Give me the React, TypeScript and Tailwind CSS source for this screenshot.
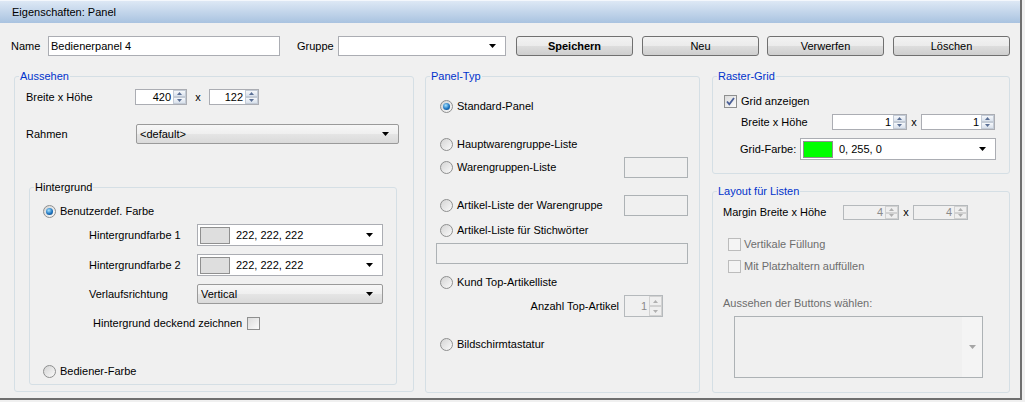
import type { ReactNode } from "react";

function Arrow({ disabled }: { disabled?: boolean }) {
  return (
    <svg width="7" height="4" viewBox="0 0 7 4" className="shrink-0">
      <path d="M0 0h7L3.5 4z" fill={disabled ? "#a5a5a5" : "#000"} />
    </svg>
  );
}

function SpinHalf({ up, disabled }: { up?: boolean; disabled?: boolean }) {
  return (
    <div
      className={`flex flex-1 items-center justify-center border ${
        disabled
          ? "border-[#d2d2d2] bg-[#efefef]"
          : "border-[#c3cbd6] bg-gradient-to-b from-[#f6f8fb] to-[#d9e1ec]"
      }`}
    >
      <svg width="5" height="3" viewBox="0 0 5 3">
        <path d={up ? "M0 3h5L2.5 0z" : "M0 0h5L2.5 3z"} fill={disabled ? "#b0b0b0" : "#5a6f95"} />
      </svg>
    </div>
  );
}

function Spin({ value, className, disabled }: { value: string; className: string; disabled?: boolean }) {
  return (
    <div
      className={`flex border ${
        disabled ? "border-[#b5b9bc] bg-[#f0f0f0] text-[#8a8a8a]" : "border-[#abadb3] bg-white text-black"
      } ${className}`}
    >
      <span className="flex-1 self-center pr-[2px] text-right leading-none">{value}</span>
      <div className="flex w-[13px] flex-col">
        <SpinHalf up disabled={disabled} />
        <SpinHalf disabled={disabled} />
      </div>
    </div>
  );
}

function Combo({
  className,
  children,
  gray
}: {
  className: string;
  children?: ReactNode;
  gray?: boolean;
}) {
  return (
    <div
      className={`flex items-center pr-[9px] ${
        gray
          ? "rounded-[2px] border border-[#9a9a9a] bg-[linear-gradient(#f7f7f7,#efefef_50%,#e5e5e5_50%,#dadada)] pl-[3px]"
          : "border border-[#abadb3] bg-white"
      } ${className}`}
    >
      <div className="flex flex-1 items-center">{children}</div>
      <Arrow />
    </div>
  );
}

function ColorCombo({ color, label, className }: { color: string; label: string; className: string }) {
  return (
    <Combo className={`${className} pl-[2px]`}>
      <span className={`h-[17px] w-[30px] border border-[#8f8f8f] ${color}`} />
      <span className="ml-[6px]">{label}</span>
    </Combo>
  );
}

function Radio({ checked }: { checked?: boolean }) {
  return (
    <span className="flex h-[13px] w-[13px] shrink-0 items-center justify-center rounded-full border border-[#8e8f8f] bg-gradient-to-br from-[#d4d4d4] to-[#fafafa]">
      {checked ? (
        <span className="h-[7px] w-[7px] rounded-full bg-[radial-gradient(circle_at_40%_35%,#a8e4ff,#1d74c0_55%,#0c3b6e)]" />
      ) : null}
    </span>
  );
}

function Check({ checked, disabled }: { checked?: boolean; disabled?: boolean }) {
  return (
    <span
      className={`flex h-[13px] w-[13px] shrink-0 items-center justify-center border ${
        disabled ? "border-[#bcbcbc] bg-[#f4f4f4]" : "border-[#8e8f8f] bg-gradient-to-br from-[#dcdcdc] to-[#fbfbfb]"
      }`}
    >
      {checked ? (
        <svg width="9" height="9" viewBox="0 0 9 9">
          <path d="M1 4.5l2.3 2.8L8 1" fill="none" stroke="#4a5f97" strokeWidth="1.8" />
        </svg>
      ) : null}
    </span>
  );
}

function Group({
  title,
  className,
  children,
  black
}: {
  title: string;
  className: string;
  children: ReactNode;
  black?: boolean;
}) {
  return (
    <fieldset className={`rounded-[3px] border border-[#d5dfe5] ${className}`}>
      <legend className={`ml-[4px] px-[1px] leading-[14px] ${black ? "text-black" : "text-[#0033cc]"}`}>
        {title}
      </legend>
      {children}
    </fieldset>
  );
}

function Button({ children, bold }: { children: ReactNode; bold?: boolean }) {
  return (
    <button
      className={`h-[20px] w-[117px] rounded-[3px] border border-[#707070] bg-[linear-gradient(#f2f2f2,#ebebeb_50%,#dddddd_50%,#cfcfcf)] leading-none text-black ${
        bold ? "font-bold" : ""
      }`}
    >
      {children}
    </button>
  );
}

function RadioRow({ label, checked, className }: { label: string; checked?: boolean; className: string }) {
  return (
    <div className={`flex h-[16px] items-center ${className}`}>
      <Radio checked={checked} />
      <span className="ml-[4px]">{label}</span>
    </div>
  );
}

export default function App() {
  return (
    <div className="h-[402px] w-[1025px] bg-[#f0f0f0] font-['Liberation_Sans',Arial,sans-serif] text-[11px] text-black">
      <div className="h-[400px] w-[1022px] border-b-2 border-r-2 border-[#6f6f6f]">
        <div className="flex h-[23px] items-center border-t border-[#f3f7fc] bg-[linear-gradient(#dde8f5,#a9c3e0)] pl-[12px] text-[11px]">
          Eigenschaften: Panel
        </div>

        <div className="mt-[13px] flex h-[20px] items-center pl-[11px]">
          <span className="w-[37px]">Name</span>
          <div className="flex h-[20px] w-[232px] items-center border border-[#abadb3] bg-white pl-[2px]">
            Bedienerpanel 4
          </div>
          <span className="ml-[17px] w-[41px]">Gruppe</span>
          <Combo className="h-[20px] w-[168px]" />
          <div className="ml-[10px] flex">
            <Button bold>Speichern</Button>
            <div className="ml-[9px]">
              <Button>Neu</Button>
            </div>
            <div className="ml-[8px]">
              <Button>Verwerfen</Button>
            </div>
            <div className="ml-[9px]">
              <Button>Löschen</Button>
            </div>
          </div>
        </div>

        <div className="mt-[13px] flex pl-[14px]">
          <Group title="Aussehen" className="h-[323px] w-[400px]">
            <div className="ml-[11px] mt-[6px] flex h-[16px] items-center">
              <span className="w-[109px]">Breite x Höhe</span>
              <Spin value="420" className="h-[16px] w-[52px]" />
              <span className="w-[22px] text-center">x</span>
              <Spin value="122" className="h-[16px] w-[50px]" />
            </div>
            <div className="ml-[11px] mt-[19px] flex h-[20px] items-center">
              <span className="w-[110px]">Rahmen</span>
              <Combo gray className="h-[20px] w-[263px]">
                &lt;default&gt;
              </Combo>
            </div>

            <Group title="Hintergrund" black className="ml-[14px] mt-[36px] h-[205px] w-[368px]">
              <RadioRow label="Benutzerdef. Farbe" checked className="ml-[13px] mt-[9px]" />
              <div className="ml-[59px] mt-[5px] flex h-[22px] items-center">
                <span className="w-[108px]">Hintergrundfarbe 1</span>
                <ColorCombo color="bg-[#dedede]" label="222, 222, 222" className="h-[22px] w-[186px]" />
              </div>
              <div className="ml-[59px] mt-[8px] flex h-[22px] items-center">
                <span className="w-[108px]">Hintergrundfarbe 2</span>
                <ColorCombo color="bg-[#dedede]" label="222, 222, 222" className="h-[22px] w-[186px]" />
              </div>
              <div className="ml-[59px] mt-[8px] flex h-[20px] items-center">
                <span className="w-[108px]">Verlaufsrichtung</span>
                <Combo gray className="h-[20px] w-[186px]">
                  Vertical
                </Combo>
              </div>
              <div className="ml-[63px] mt-[12px] flex h-[14px] items-center">
                <span>Hintergrund deckend zeichnen</span>
                <span className="ml-[5px]">
                  <Check />
                </span>
              </div>
              <RadioRow label="Bediener-Farbe" className="ml-[13px] mt-[33px]" />
            </Group>
          </Group>

          <Group title="Panel-Typ" className="ml-[11px] h-[324px] w-[275px]">
            <RadioRow label="Standard-Panel" checked className="ml-[14px] mt-[15px]" />
            <RadioRow label="Hauptwarengruppe-Liste" className="ml-[14px] mt-[22px]" />
            <div className="ml-[14px] mr-[11px] mt-[5px] flex h-[21px] items-center justify-between">
              <div className="flex items-center">
                <Radio />
                <span className="ml-[4px]">Warengruppen-Liste</span>
              </div>
              <div className="h-[21px] w-[64px] border border-[#adb2b5] bg-[#f0f0f0]" />
            </div>
            <div className="ml-[14px] mr-[11px] mt-[17px] flex h-[21px] items-center justify-between">
              <div className="flex items-center">
                <Radio />
                <span className="ml-[4px]">Artikel-Liste der Warengruppe</span>
              </div>
              <div className="h-[21px] w-[64px] border border-[#adb2b5] bg-[#f0f0f0]" />
            </div>
            <RadioRow label="Artikel-Liste für Stichwörter" className="ml-[14px] mt-[6px]" />
            <div className="ml-[10px] mt-[5px] h-[21px] w-[252px] border border-[#adb2b5] bg-[#f0f0f0]" />
            <RadioRow label="Kund Top-Artikelliste" className="ml-[14px] mt-[10px]" />
            <div className="mr-[36px] mt-[5px] flex h-[22px] items-center justify-end">
              <span className="mr-[5px]">Anzahl Top-Artikel</span>
              <Spin value="1" disabled className="h-[22px] w-[39px]" />
            </div>
            <RadioRow label="Bildschirmtastatur" className="ml-[14px] mt-[19px]" />
          </Group>

          <div className="ml-[12px] flex w-[298px] flex-col">
            <Group title="Raster-Grid" className="h-[105px] w-[298px]">
              <div className="ml-[11px] mt-[11px] flex h-[14px] items-center">
                <Check checked />
                <span className="ml-[4px]">Grid anzeigen</span>
              </div>
              <div className="ml-[28px] mt-[6px] flex h-[16px] items-center">
                <span className="w-[91px]">Breite x Höhe</span>
                <Spin value="1" className="h-[16px] w-[75px]" />
                <span className="w-[14px] text-center">x</span>
                <Spin value="1" className="h-[16px] w-[74px]" />
              </div>
              <div className="ml-[27px] mt-[8px] flex h-[22px] items-center">
                <span className="w-[60px]">Grid-Farbe:</span>
                <ColorCombo color="bg-[#00ff00]" label="0, 255, 0" className="h-[22px] w-[196px]" />
              </div>
            </Group>

            <Group title="Layout für Listen" className="mt-[10px] h-[209px] w-[298px]">
              <div className="ml-[10px] mt-[7px] flex h-[15px] items-center">
                <span className="w-[120px]">Margin Breite x Höhe</span>
                <Spin value="4" disabled className="h-[15px] w-[56px]" />
                <span className="w-[14px] text-center">x</span>
                <Spin value="4" disabled className="h-[15px] w-[55px]" />
              </div>
              <div className="ml-[15px] mt-[17px] flex h-[14px] items-center text-[#6d6d6d]">
                <Check disabled />
                <span className="ml-[3px]">Vertikale Füllung</span>
              </div>
              <div className="ml-[15px] mt-[8px] flex h-[14px] items-center text-[#6d6d6d]">
                <Check disabled />
                <span className="ml-[3px]">Mit Platzhaltern auffüllen</span>
              </div>
              <div className="ml-[10px] mt-[23px] flex h-[14px] items-center text-[#6d6d6d]">
                Aussehen der Buttons wählen:
              </div>
              <div className="ml-[21px] mt-[6px] flex h-[62px] w-[249px] border border-[#adb2b5] bg-[#f0f0f0]">
                <div className="flex-1" />
                <div className="flex w-[20px] items-center justify-center bg-[#f4f4f4]">
                  <Arrow disabled />
                </div>
              </div>
            </Group>
          </div>
        </div>
      </div>
    </div>
  );
}
